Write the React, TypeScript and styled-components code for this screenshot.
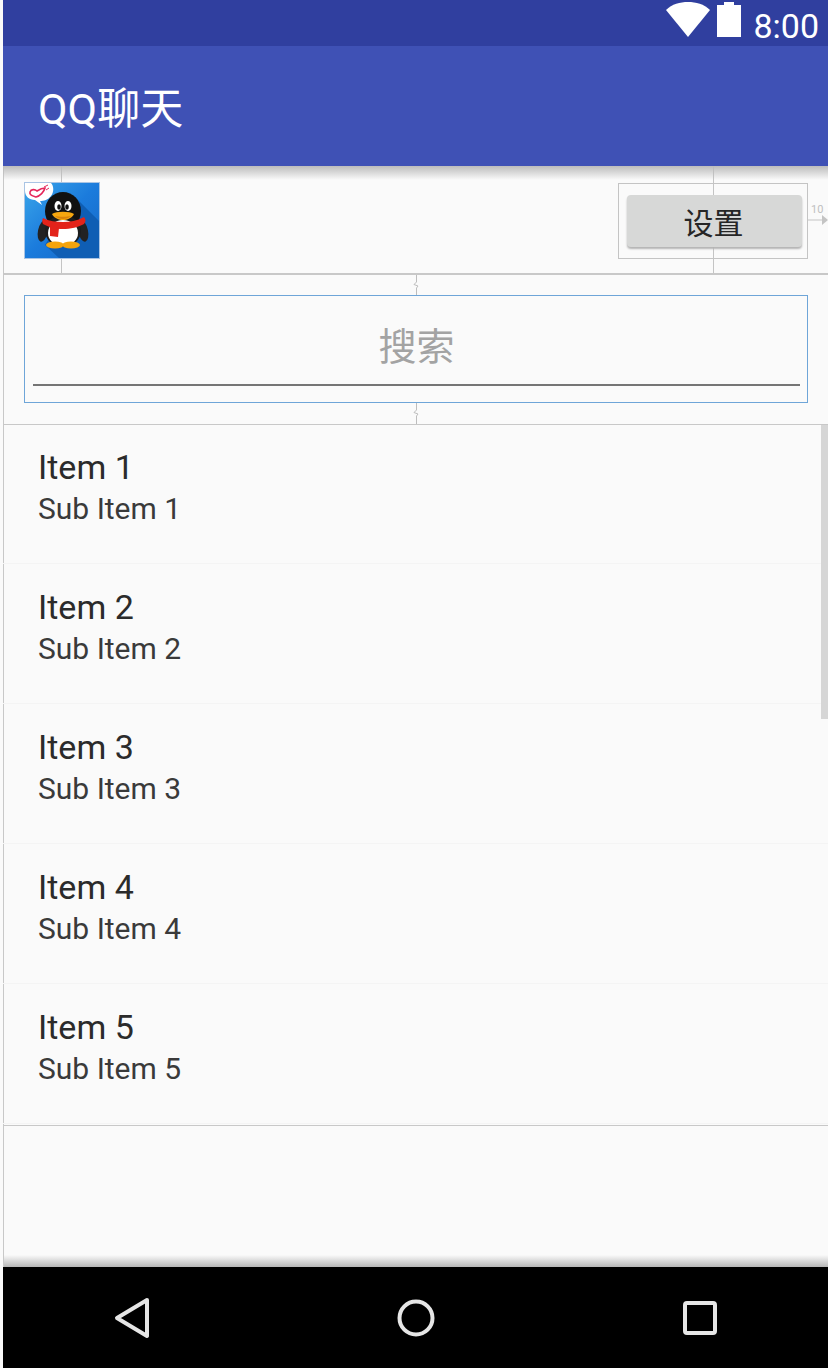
import React from 'react'
import styled, { createGlobalStyle } from 'styled-components'

const GlobalStyle = createGlobalStyle`
  html, body {
    margin: 0;
    padding: 0;
    background: #fafafa;
  }
  * {
    box-sizing: border-box;
  }
`;

const Screen = styled.div`
  width: 828px;
  height: 1368px;
  display: flex;
  flex-direction: column;
  font-family: Roboto, "Noto Sans CJK SC", sans-serif;
  background: #fafafa;
  overflow: hidden;
  padding-left: 3px;
  position: relative;
`;

const LeftEdge = styled.div`
  position: absolute;
  left: 3px;
  top: 166px;
  width: 1px;
  height: 1101px;
  background: #c8c8c8;
`;

const StatusBar = styled.div`
  height: 46px;
  background: #303f9f;
  display: flex;
  justify-content: flex-end;
  align-items: flex-start;
  padding-right: 9px;
  color: #fff;
  flex: none;
`;

const WifiIcon = styled.svg`
  display: block;
  flex: none;
  margin-top: 1px;
`;

const BatteryIcon = styled.svg`
  display: block;
  flex: none;
  margin: 1px 0 0 7px;
`;

const Clock = styled.span`
  font-size: 34px;
  line-height: 46px;
  margin-left: 12px;
  margin-top: 3px;
`;

const AppBar = styled.div`
  height: 120px;
  background: #3f51b5;
  display: flex;
  align-items: center;
  padding: 0 0 2px 35px;
  color: #fff;
  font-size: 43px;
  flex: none;
`;

const Toolbar = styled.div`
  height: 109px;
  border-bottom: 2px solid #c8c8c8;
  display: flex;
  align-items: center;
  justify-content: space-between;
  padding: 2px 20px 0 21px;
  position: relative;
  flex: none;
`;

const TopShadow = styled.div`
  position: absolute;
  left: 0;
  right: 0;
  top: 0;
  height: 14px;
  background: linear-gradient(#bcbcbc, rgba(250, 250, 250, 0));
  z-index: 1;
`;

const AvatarBox = styled.div`
  width: 76px;
  height: 77px;
  border: 1px solid #a9c4e4;
  position: relative;
  z-index: 2;

  svg {
    display: block;
  }
`;

const ButtonFrame = styled.div`
  width: 190px;
  height: 76px;
  border: 1px solid #c4c4c4;
  padding: 11px 5px 12px 8px;
  position: relative;
  z-index: 2;
`;

const SettingsButton = styled.div`
  height: 52px;
  border-radius: 4px;
  background: #d7d8d7;
  box-shadow: 0 2px 2px #b4b4b4;
  display: flex;
  align-items: center;
  justify-content: center;
  font-size: 30px;
  color: #262626;
  padding-right: 2px;
`;

const VerticalGuide = styled.div<{ $left: number }>`
  position: absolute;
  left: ${p => p.$left}px;
  top: 0;
  height: 107px;
  width: 1px;
  background: #c4c4c4;
`;

const MarginLabel = styled.span`
  position: absolute;
  left: 808px;
  top: 37px;
  font-size: 11px;
  color: #c0c0c0;
`;

const MarginArrow = styled.svg`
  position: absolute;
  left: 805px;
  top: 49px;
`;

const SearchSection = styled.div`
  height: 150px;
  border-bottom: 1px solid #c8c8c8;
  padding: 20px 20px 21px 21px;
  position: relative;
  flex: none;
`;

const SearchBox = styled.div`
  height: 108px;
  border: 1px solid #6ea5d8;
  padding: 0 7px 16px 8px;
`;

const SearchField = styled.div`
  height: 90px;
  border-bottom: 2px solid #757575;
  display: flex;
  align-items: center;
  justify-content: center;
  font-size: 38px;
  color: #a3a3a3;
  padding-top: 6px;
`;

const GuideMark = styled.svg<{ $top: number }>`
  position: absolute;
  left: 409px;
  top: ${p => p.$top}px;
`;

const List = styled.div`
  height: 701px;
  border-bottom: 1px solid #c8c8c8;
  position: relative;
  flex: none;
`;

const ListItem = styled.div`
  height: 140px;
  padding: 23px 0 0 35px;
  border-bottom: 1px solid #f4f4f4;

  &:first-child {
    height: 139px;
    padding-top: 22px;
  }
`;

const ItemTitle = styled.div`
  font-size: 34px;
  line-height: 40px;
  color: #2b2b2b;
`;

const ItemSub = styled.div`
  font-size: 30px;
  line-height: 44px;
  color: #3a3a3a;
`;

const ScrollThumb = styled.div`
  position: absolute;
  right: 0;
  top: 0;
  width: 7px;
  height: 294px;
  background: #d6d6d6;
`;

const EmptyArea = styled.div`
  flex: 1;
  background: linear-gradient(#fafafa calc(100% - 12px), #b6b6b6);
`;

const NavBar = styled.div`
  height: 101px;
  background: #000;
  display: flex;
  align-items: center;
  justify-content: center;
  flex: none;
`;

const NavSlot = styled.div`
  width: 284px;
  flex: none;
  display: flex;
  justify-content: center;

  svg {
    display: block;
  }
`;

const Avatar = () => (
  <svg width="74" height="75" viewBox="0 0 74 75">
    <defs>
      <linearGradient id="sky" x1="0" y1="0" x2="1" y2="1">
        <stop offset="0" stopColor="#3aa6ea" />
        <stop offset="0.5" stopColor="#1b7bdc" />
        <stop offset="1" stopColor="#1668c6" />
      </linearGradient>
    </defs>
    <rect width="74" height="75" fill="url(#sky)" />
    <path d="M50 14 74 38V75H34L20 62z" fill="#0f5eb4" />
    <path d="M0 0h26c3 3 3 9 0 13-3 4-7 5-11 5l2 4-7-5C4 17 0 13 0 8z" fill="#fff" />
    <path d="M5 9c1-3 5-3 7-1 3-2 6-3 8-3-1 4-5 8-9 9-3-1-7-2-6-5z" fill="none" stroke="#e5265a" strokeWidth="1.6" />
    <path d="M19 4l4-2M21 7l3-2" stroke="#e5265a" strokeWidth="1" />
    <ellipse cx="18" cy="48" rx="5" ry="11" fill="#222" transform="rotate(12 18 48)" />
    <ellipse cx="58" cy="48" rx="5" ry="11" fill="#222" transform="rotate(-12 58 48)" />
    <ellipse cx="38" cy="28" rx="18" ry="19" fill="#111" />
    <ellipse cx="38" cy="48" rx="18" ry="16" fill="#1d1d1d" />
    <ellipse cx="38" cy="50" rx="15" ry="13" fill="#fff" />
    <ellipse cx="33" cy="23" rx="3.5" ry="5" fill="#fff" />
    <ellipse cx="43" cy="23" rx="3.5" ry="5" fill="#fff" />
    <ellipse cx="34" cy="24" rx="1.8" ry="2.8" fill="#111" />
    <ellipse cx="42" cy="24" rx="1.8" ry="2.8" fill="#111" />
    <path d="M27 31c4-3 18-3 22 0-2 4-7 6-11 6s-9-2-11-6z" fill="#f7a70f" />
    <path d="M30 33c4 1 12 1 16 0-2 2-5 3-8 3s-6-1-8-3z" fill="#d9820a" />
    <path d="M18 35c6 3 13 4 20 4s14-1 21-5c2 2 2 5 0 7-5 3-14 5-21 5-7 0-15-2-20-5-1-2-1-4 0-6z" fill="#e3231a" />
    <path d="M25 42l9 3-1 9-8-1z" fill="#e3231a" />
    <ellipse cx="30" cy="62" rx="9" ry="3.5" fill="#f4a40d" />
    <ellipse cx="46" cy="62" rx="9" ry="3.5" fill="#f4a40d" />
  </svg>
);

const items = [1, 2, 3, 4, 5];

export default function App() {
  return (
    <Screen>
      <GlobalStyle />
      <LeftEdge />
      <StatusBar>
        <WifiIcon width="44" height="36" viewBox="0 0 44 36">
          <path d="M0 9C6 3 14 1 22 1s16 2 22 8L22 36z" fill="#fff" />
        </WifiIcon>
        <BatteryIcon width="24" height="36" viewBox="0 0 24 36">
          <path d="M7 1h10v3h7v33H0V4h7z" fill="#fff" />
        </BatteryIcon>
        <Clock>8:00</Clock>
      </StatusBar>
      <AppBar>QQ聊天</AppBar>
      <Toolbar>
        <TopShadow />
        <VerticalGuide $left={58} />
        <VerticalGuide $left={710} />
        <AvatarBox>
          <Avatar />
        </AvatarBox>
        <ButtonFrame>
          <SettingsButton>设置</SettingsButton>
        </ButtonFrame>
        <MarginLabel>10</MarginLabel>
        <MarginArrow width="20" height="10" viewBox="0 0 20 10">
          <path d="M0 5h14" stroke="#c4c4c4" strokeWidth="1" />
          <path d="M14 0l6 5-6 5z" fill="#c4c4c4" />
        </MarginArrow>
      </Toolbar>
      <SearchSection>
        <GuideMark $top={0} width="8" height="20" viewBox="0 0 8 20">
          <path d="M4.5 0v7L2 9.5 6 11 4.5 13v7" fill="none" stroke="#bdbdbd" strokeWidth="1" />
        </GuideMark>
        <SearchBox>
          <SearchField>搜索</SearchField>
        </SearchBox>
        <GuideMark $top={128} width="8" height="21" viewBox="0 0 8 21">
          <path d="M4.5 0v7L2 9.5 6 11 4.5 13v8" fill="none" stroke="#bdbdbd" strokeWidth="1" />
        </GuideMark>
      </SearchSection>
      <List>
        {items.map(n => (
          <ListItem key={n}>
            <ItemTitle>Item {n}</ItemTitle>
            <ItemSub>Sub Item {n}</ItemSub>
          </ListItem>
        ))}
        <ScrollThumb />
      </List>
      <EmptyArea />
      <NavBar>
        <NavSlot>
          <svg width="36" height="42" viewBox="0 0 36 42">
            <path d="M33 3 3 21l30 18z" fill="none" stroke="#e6e6e6" strokeWidth="4" strokeLinejoin="round" />
          </svg>
        </NavSlot>
        <NavSlot>
          <svg width="38" height="38" viewBox="0 0 38 38">
            <circle cx="19" cy="19" r="16.5" fill="none" stroke="#e6e6e6" strokeWidth="4" />
          </svg>
        </NavSlot>
        <NavSlot>
          <svg width="34" height="34" viewBox="0 0 34 34">
            <rect x="2" y="2" width="30" height="30" rx="2" fill="none" stroke="#e6e6e6" strokeWidth="4" />
          </svg>
        </NavSlot>
      </NavBar>
    </Screen>
  )
}
